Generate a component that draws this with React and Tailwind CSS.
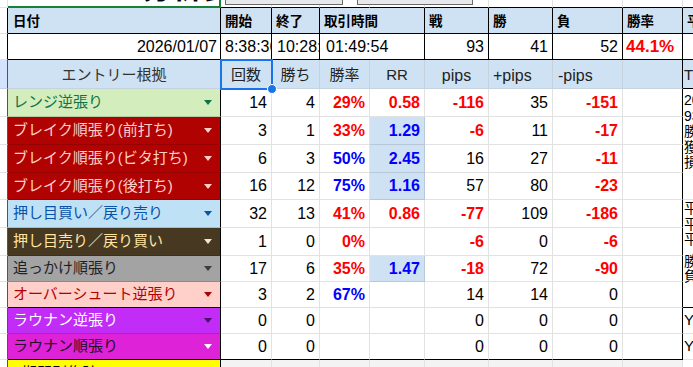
import React from 'react';

const RED = 'text-[#ff0000] font-bold';
const BLUE = 'text-[#0000ff] font-bold';
const tone = (c) => (c === 'r' ? RED : c === 'b' ? BLUE : 'text-black');

const entries = [
  { label: 'レンジ逆張り', bg: 'bg-[#d4edbc]', fg: 'text-[#11734b]', tri: '#11734b', cnt: '14', win: '4', rate: ['29%', 'r'], rr: ['0.58', 'r', false], pips: ['-116', 'r'], plus: '35', minus: ['-151', 'r'] },
  { label: 'ブレイク順張り(前打ち)', bg: 'bg-[#b10202]', fg: 'text-[#ffcfc9]', tri: '#ffcfc9', cnt: '3', win: '1', rate: ['33%', 'r'], rr: ['1.29', 'b', true], pips: ['-6', 'r'], plus: '11', minus: ['-17', 'r'] },
  { label: 'ブレイク順張り(ビタ打ち)', bg: 'bg-[#b10202]', fg: 'text-[#ffcfc9]', tri: '#ffcfc9', cnt: '6', win: '3', rate: ['50%', 'b'], rr: ['2.45', 'b', true], pips: ['16', ''], plus: '27', minus: ['-11', 'r'] },
  { label: 'ブレイク順張り(後打ち)', bg: 'bg-[#b10202]', fg: 'text-[#ffcfc9]', tri: '#ffcfc9', cnt: '16', win: '12', rate: ['75%', 'b'], rr: ['1.16', 'b', true], pips: ['57', ''], plus: '80', minus: ['-23', 'r'] },
  { label: '押し目買い／戻り売り', bg: 'bg-[#bfe1f6]', fg: 'text-[#0a53a8]', tri: '#0a53a8', cnt: '32', win: '13', rate: ['41%', 'r'], rr: ['0.86', 'r', false], pips: ['-77', 'r'], plus: '109', minus: ['-186', 'r'] },
  { label: '押し目売り／戻り買い', bg: 'bg-[#473822]', fg: 'text-[#ffe5a0]', tri: '#eee6d6', cnt: '1', win: '0', rate: ['0%', 'r'], rr: ['', '', false], pips: ['-6', 'r'], plus: '0', minus: ['-6', 'r'] },
  { label: '追っかけ順張り', bg: 'bg-[#a3a3a3]', fg: 'text-[#1f1f1f]', tri: '#3d3d3d', cnt: '17', win: '6', rate: ['35%', 'r'], rr: ['1.47', 'b', true], pips: ['-18', 'r'], plus: '72', minus: ['-90', 'r'] },
  { label: 'オーバーシュート逆張り', bg: 'bg-[#ffcfc9]', fg: 'text-[#b10202]', tri: '#b10202', cnt: '3', win: '2', rate: ['67%', 'b'], rr: ['', '', false], pips: ['14', ''], plus: '14', minus: ['0', ''] },
  { label: 'ラウナン逆張り', bg: 'bg-[#c12cf7]', fg: 'text-white', tri: '#4a0f6b', cnt: '0', win: '0', rate: ['', ''], rr: ['', '', false], pips: ['0', ''], plus: '0', minus: ['0', ''] },
  { label: 'ラウナン順張り', bg: 'bg-[#dd22d8]', fg: 'text-[#2b0a2b]', tri: '#ffffff', cnt: '0', win: '0', rate: ['', ''], rr: ['', '', false], pips: ['0', ''], plus: '0', minus: ['0', ''] },
];

const Tri = ({ color }) => (
  <svg width="8" height="5" viewBox="0 0 8 5" className="shrink-0">
    <polygon points="0,0 8,0 4,5" fill={color} />
  </svg>
);

const stub = 'border-r border-b border-r-[#555] border-b-[#e2e2e2]';
const hd = 'bg-[#cfe2f3] border-r border-b border-black font-bold text-[13.5px] pl-[4px] pt-[3px] flex items-center whitespace-nowrap overflow-hidden';
const dt = 'bg-white border-r border-b border-black text-[16px] flex items-center whitespace-nowrap overflow-hidden';
const h2 = 'bg-[#cfe2f3] border-r border-b border-r-[#c6d2de] border-b-[#c6d2de] text-[15px] text-[#222] pt-[3px] flex items-center whitespace-nowrap overflow-hidden';
const num = 'border-r border-b text-[16px] flex items-center justify-end pr-[4px] whitespace-nowrap overflow-hidden';

export default function App() {
  return (
    <div className="w-[693px] h-[367px] overflow-hidden bg-white font-['Liberation_Sans','Noto_Sans_CJK_JP',sans-serif] text-black">
      <div className="relative grid grid-cols-[8px_213px_51px_48px_50px_55px_64px_64px_70px_60px_40px] grid-rows-[8px_26px_26px_29px_28px_28px_28px_27px_28px_28px_26px_26px_26px_26px_20px]">
        {/* row 0 */}
        <div className="border-r border-b border-[#e2e2e2]" />
        <div className="border-r-2 border-b-2 border-[#188038] overflow-hidden">
          <div className="-mt-[28px] pl-[14px] text-[30px] leading-[32px] font-bold whitespace-nowrap">トレード分析表</div>
        </div>
        {Array.from({ length: 9 }).map((_, i) => (
          <div key={i} className="border-r border-b border-r-[#e2e2e2] border-b-black" />
        ))}

        {/* row 1 */}
        <div className="border-r border-b border-r-black border-b-[#e2e2e2]" />
        <div className={hd + ' pl-[5px]'}>日付</div>
        <div className={hd}>開始</div>
        <div className={hd}>終了</div>
        <div className={hd + ' col-span-2'}>取引時間</div>
        <div className={hd}>戦</div>
        <div className={hd}>勝</div>
        <div className={hd}>負</div>
        <div className={hd}>勝率</div>
        <div className={hd}>平均</div>

        {/* row 2 */}
        <div className="border-r border-b border-r-black border-b-[#e2e2e2]" />
        <div className={dt + ' justify-end pr-[3px]'}>2026/01/07</div>
        <div className={dt + ' pl-[4px]'}>8:38:36</div>
        <div className={dt + ' pl-[5px]'}>10:28:25</div>
        <div className={dt + ' col-span-2 pl-[6px]'}>01:49:54</div>
        <div className={dt + ' justify-end pr-[4px]'}>93</div>
        <div className={dt + ' justify-end pr-[4px]'}>41</div>
        <div className={dt + ' justify-end pr-[4px]'}>52</div>
        <div className={dt + ' pl-[3px] text-[17px] ' + RED}>44.1%</div>
        <div className={dt} />

        {/* row 3 */}
        <div className="bg-[#d3e3fd] border-r border-b border-r-[#555] border-b-[#c6d2de]" />
        <div className={h2 + ' justify-center text-[13.5px] text-[#333] border-r-black'}>エントリー根拠</div>
        <div className={h2 + ' justify-center'}>回数</div>
        <div className={h2 + ' justify-center'}>勝ち</div>
        <div className={h2 + ' justify-center'}>勝率</div>
        <div className={h2 + ' justify-center'}>RR</div>
        <div className={h2 + ' justify-center text-[16px]'}>pips</div>
        <div className={h2 + ' pl-[4px] text-[16px]'}>+pips</div>
        <div className={h2 + ' pl-[5px] text-[16px]'}>-pips</div>
        <div className={h2 + ' border-r-black'} />
        <div className={h2 + ' border-b-black pl-[1px]'}>TOTAL</div>

        {/* data rows */}
        {entries.map((e, i) => {
          const last = i === entries.length - 1;
          const bline = last ? 'border-b-black' : 'border-b-[#e2e2e2]';
          const aLine = i === 7 || last ? 'border-b-black' : 'border-b-black/15';
          return (
            <React.Fragment key={e.label}>
              <div className={stub} />
              <div className={`${e.bg} ${e.fg} border-r border-b border-r-black ${aLine} flex items-center pl-[5px] pr-[8px] text-[15px]`}>
                <span className="flex-1 overflow-hidden whitespace-nowrap">{e.label}</span>
                <Tri color={e.tri} />
              </div>
              <div className={`${num} border-r-[#e2e2e2] ${bline}`}>{e.cnt}</div>
              <div className={`${num} border-r-[#e2e2e2] ${bline}`}>{e.win}</div>
              <div className={`${num} border-r-[#e2e2e2] ${bline} ${tone(e.rate[1])}`}>{e.rate[0]}</div>
              <div className={`${num} ${e.rr[2] ? 'bg-[#cfe2f3] border-r-[#b9c8d8] border-b-[#b9c8d8]' : 'border-r-[#e2e2e2] ' + bline} ${tone(e.rr[1])}`}>{e.rr[0]}</div>
              <div className={`${num} border-r-[#e2e2e2] ${bline} ${tone(e.pips[1])}`}>{e.pips[0]}</div>
              <div className={`${num} border-r-[#e2e2e2] ${bline}`}>{e.plus}</div>
              <div className={`${num} border-r-[#e2e2e2] ${bline} ${tone(e.minus[1])}`}>{e.minus[0]}</div>
              <div className={`border-r border-b border-r-black ${bline}`} />
              {i === 0 && (
                <div className="row-span-4 border-b border-[#e2e2e2] text-[14px] leading-[15.5px] pt-[4px] pl-[1px] whitespace-nowrap overflow-hidden">
                  <div>2026年1月 集計</div>
                  <div>93戦 41勝 52敗</div>
                  <div>勝率 44.1%</div>
                  <div>獲得pips 356</div>
                  <div>損失pips -484</div>
                </div>
              )}
              {i === 4 && (
                <div className="row-span-4 border-b border-black text-[14px] leading-[15.5px] pt-[1px] pl-[1px] whitespace-nowrap overflow-hidden">
                  <div>平均利益 8.7</div>
                  <div>平均損失 -9.3</div>
                  <div>平均RR 0.93</div>
                  <div className="mt-[6px]">勝ちトレード</div>
                  <div>負けトレード</div>
                </div>
              )}
              {i >= 8 && (
                <div className="border-b border-[#e2e2e2] text-[15px] flex items-center pl-[1px] overflow-hidden whitespace-nowrap">Y</div>
              )}
            </React.Fragment>
          );
        })}

        {/* last partial row */}
        <div className={stub} />
        <div className="bg-[#ffff00] border-r border-r-black text-[15px] pl-[14px] pt-[2px] overflow-hidden whitespace-nowrap">期間別集計</div>
        {Array.from({ length: 8 }).map((_, i) => (
          <div key={i} className="bg-[#f3f3f3] border-r border-[#e2e2e2]" />
        ))}
        <div className="bg-white" />

        {/* drawings over the sheet */}
        <div className="absolute left-[225px] top-[-10px] w-[118px] h-[15px] bg-[#e6e8eb] border border-[#6a6a6a]" />
        <div className="absolute left-[357px] top-[-10px] w-[116px] h-[15px] bg-[#e6e8eb] border border-[#6a6a6a]" />

        {/* selection */}
        <div className="absolute left-[220px] top-[59px] w-[53px] h-[31px] border-2 border-[#1a73e8]" />
        <div className="absolute left-[267px] top-[84px] w-[10px] h-[10px] rounded-full bg-[#1a73e8] border border-white" />
      </div>
    </div>
  );
}
